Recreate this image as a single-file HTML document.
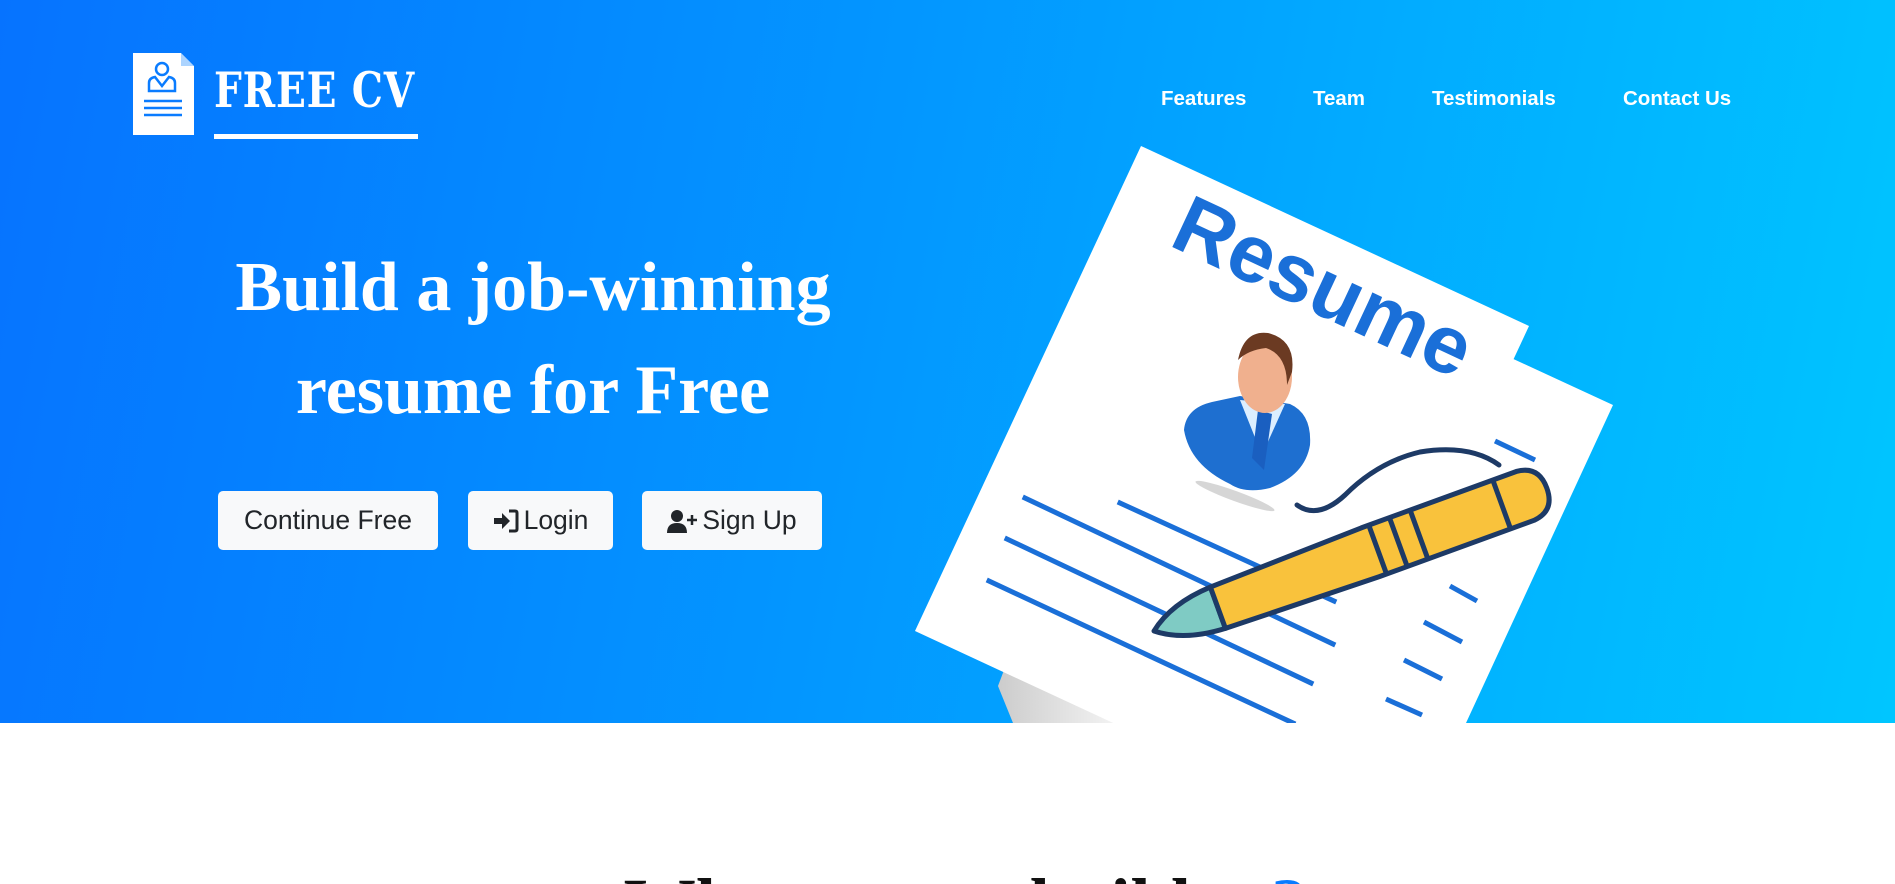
<!DOCTYPE html>
<html><head><meta charset="utf-8"><style>
*{margin:0;padding:0;box-sizing:border-box}
html,body{width:1895px;height:884px;overflow:hidden}
body{background:#fff;font-family:"Liberation Sans",sans-serif;position:relative}
.wrap{position:absolute;left:0;top:0;width:1895px;height:884px;overflow:hidden}
.hero{position:absolute;left:0;top:0;width:1895px;height:723px;background:linear-gradient(100deg,#0673ff 0%,#0396ff 45%,#00c6ff 100%);overflow:hidden}
.brand{position:absolute;left:214px;top:66px;color:#fff;font-family:"DejaVu Serif","Liberation Serif",serif;font-weight:bold;font-size:49px;letter-spacing:1px;line-height:1;transform:scaleX(.8);transform-origin:0 0}
.uline{position:absolute;left:214px;top:134px;width:204px;height:5px;background:#fff}
.nav a{position:absolute;top:87px;color:#fff;font-weight:bold;font-size:20.5px;text-decoration:none}
h1{position:absolute;left:183px;width:700px;top:236px;text-align:center;color:#fff;font-family:"Liberation Serif",serif;font-weight:bold;font-size:70px;line-height:103px}
.btn{position:absolute;top:491px;height:59px;background:#f8f9fa;border-radius:5px;color:#212529;font-size:26.5px;display:flex;align-items:center;justify-content:center;gap:5px}
.bot{position:absolute;left:0;top:723px;width:1895px;height:161px;overflow:hidden}
h2{position:absolute;left:18px;width:1895px;top:145px;text-align:center;font-family:"Liberation Serif",serif;font-weight:bold;font-size:72px;color:#111;line-height:1;white-space:nowrap}
</style></head><body><div class="wrap">
<div class="hero">
<svg style="position:absolute;left:133px;top:53px" width="61" height="82" viewBox="0 0 61 82">
<path d="M0 0H48L61 13V82H0Z" fill="#fff"/><path d="M48 0V13H61" fill="#5aa9ff" opacity=".5"/>
<circle cx="29" cy="16" r="6" fill="none" stroke="#0a7cff" stroke-width="2.5"/>
<path d="M16 38V30Q16 25 22 24L29 33L36 24Q42 25 42 30V38Z" fill="none" stroke="#0a7cff" stroke-width="2.5"/>
<path d="M11 48H49M11 55H49M11 62H49" stroke="#0a7cff" stroke-width="2.5"/>
</svg>
<div class="brand">FREE CV</div><div class="uline"></div>
<div class="nav"><a style="left:1161px">Features</a><a style="left:1313px">Team</a><a style="left:1432px">Testimonials</a><a style="left:1623px">Contact Us</a></div>
<h1>Build a job-winning<br>resume for Free</h1>
<div class="btn" style="left:218px;width:220px">Continue Free</div>
<div class="btn" style="left:468px;width:145px"><svg width="26" height="24" viewBox="0 0 26 24"><path d="M1 9H9V4L17 12L9 20V15H1Z" fill="#212529"/><path d="M16 2H22Q24 2 24 4V20Q24 22 22 22H16" fill="none" stroke="#212529" stroke-width="3"/></svg>Login</div>
<div class="btn" style="left:642px;width:180px"><svg width="30" height="24" viewBox="0 0 30 24"><circle cx="10" cy="7" r="6" fill="#212529"/><path d="M0 24Q0 14 10 14Q20 14 20 24Z" fill="#212529"/><path d="M25 6V16M20 11H30" stroke="#212529" stroke-width="2.5"/></svg>Sign Up</div>
<svg style="position:absolute;left:0;top:0" width="1895" height="723">
<defs><linearGradient id="sh" x1="0" x2="1" y1="0" y2="0"><stop offset="0" stop-color="#ccc"/><stop offset=".25" stop-color="#fff"/><stop offset="1" stop-color="#fff"/></linearGradient></defs>
<polygon points="1180,205 1613,405 1466,723 1013,723 998,686" fill="url(#sh)"/>
<g stroke="#1a6fd8" stroke-width="5"><line x1="1495" y1="441" x2="1535" y2="460"/><line x1="1450" y1="586" x2="1477" y2="601"/><line x1="1424" y1="622" x2="1462" y2="642"/><line x1="1404" y1="660" x2="1442" y2="679"/><line x1="1386" y1="699" x2="1422" y2="715"/></g>
<polygon points="1141,146 1529,326 1303,811 915,631" fill="#fff"/>
<text x="0" y="0" transform="translate(1312,312) rotate(25)" text-anchor="middle" font-family="Liberation Sans,sans-serif" font-weight="bold" font-size="82" fill="#1a6fd8">Resume</text>
<ellipse cx="1235" cy="496" rx="42" ry="5" fill="#bbb" opacity=".6" transform="rotate(20 1235 496)"/>
<path d="M1184 430Q1186 408 1212 402L1240 396L1290 404Q1312 414 1310 445Q1305 475 1270 488Q1245 494 1230 484Q1190 465 1184 430Z" fill="#1e6fd0"/>
<path d="M1240 400L1262 455L1285 404Z" fill="#dceeff"/><path d="M1258 410L1252 458L1264 470L1272 414Z" fill="#1a5fc0"/>
<ellipse cx="1265" cy="377" rx="27" ry="36" fill="#f0b08e"/>
<path d="M1238 360Q1244 330 1268 333Q1296 340 1292 372L1287 385Q1287 355 1266 348Q1248 350 1238 360Z" fill="#6b3a22"/>
<g stroke="#1a6fd8" stroke-width="5" stroke-linecap="square">
<line x1="1025" y1="498" x2="1333" y2="644"/><line x1="1120" y1="503" x2="1334" y2="601"/><line x1="1007" y1="539" x2="1311" y2="683"/><line x1="989" y1="581" x2="1293" y2="723"/>
</g>
<path d="M1297 505Q1318 520 1345 495Q1378 462 1420 452Q1470 444 1499 465" fill="none" stroke="#1d3a66" stroke-width="5" stroke-linecap="round"/>
<g transform="translate(1154,631) rotate(-20)">
<path d="M0 0Q25 -20 68 -22V22Q25 20 0 0Z" fill="#7fcbc4" stroke="#1d3a66" stroke-width="5" stroke-linejoin="round"/>
<path d="M68 -22L230 -26H395Q418 -24 418 0Q418 24 395 26H230L68 22Z" fill="#f9c23c" stroke="#1d3a66" stroke-width="5" stroke-linejoin="round"/>
<path d="M238 -26V26M260 -26V26M282 -26V26M370 -26V26" stroke="#1d3a66" stroke-width="5"/>
</g>
</svg>
</div>
<div class="bot"><h2>Why resume builder <span style="color:#0a7cff">?</span></h2></div>
</div></body></html>
